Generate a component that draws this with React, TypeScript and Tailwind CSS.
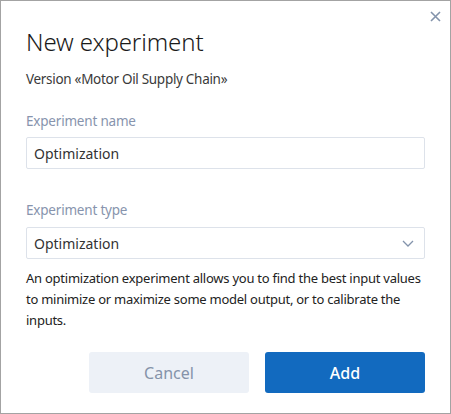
import React from "react";

export default function App() {
  const font = { fontFamily: '"Noto Sans", "Open Sans", sans-serif' };
  return (
    <div
      className="relative w-[451px] h-[414px] bg-white border border-[#a3a3a3] box-border"
      style={font}
    >
      <button className="absolute right-[9px] top-[9px] w-[12px] h-[12px] flex items-center justify-center text-[#8393ab]">
        <svg width="11" height="11" viewBox="0 0 11 11">
          <path d="M1 1L10 10M10 1L1 10" stroke="currentColor" strokeWidth="1.6" />
        </svg>
      </button>
      <div className="px-[25px] pt-[25px] flex flex-col">
        <h1 className="text-[24px] leading-[32px] text-[#1a1a1a] font-light tracking-[-0.1px]">
          New experiment
        </h1>
        <p className="mt-[11px] text-[13.5px] leading-[20px] text-[#3a3a3a] tracking-[-0.3px]">
          Version «Motor Oil Supply Chain»
        </p>
        <label className="mt-[22px] text-[13.5px] leading-[20px] text-[#8794ad] tracking-[-0.2px]">
          Experiment name
        </label>
        <div className="mt-[6px] h-[32px] border border-[#dde2ea] rounded-[2px] flex items-center px-[7px] text-[14px] text-[#333]">
          Optimization
        </div>
        <label className="mt-[31px] text-[13.5px] leading-[20px] text-[#8794ad] tracking-[-0.2px]">
          Experiment type
        </label>
        <div className="mt-[7px] h-[32px] border border-[#dde2ea] rounded-[2px] flex items-center justify-between pl-[7px] pr-[10px] text-[14px] text-[#333]">
          <span>Optimization</span>
          <svg width="12" height="7" viewBox="0 0 12 7">
            <path d="M1 1L6 6L11 1" fill="none" stroke="#8393ab" strokeWidth="1.3" />
          </svg>
        </div>
        <p className="mt-[9px] text-[13px] leading-[21px] text-[#222] tracking-[-0.25px]">
          An optimization experiment allows you to find the best input values to minimize or maximize some model output, or to calibrate the inputs.
        </p>
        <div className="mt-[21px] flex justify-end gap-[16px]">
          <button className="w-[160px] h-[41px] rounded-[3px] bg-[#edf1f7] text-[#8593a9] text-[16px]">
            Cancel
          </button>
          <button className="w-[160px] h-[41px] rounded-[3px] bg-[#126abf] text-white text-[16px] font-medium">
            Add
          </button>
        </div>
      </div>
    </div>
  );
}
